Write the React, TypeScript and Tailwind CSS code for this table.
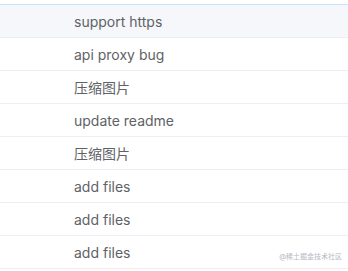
import React from 'react';

const commits = [
  'support https',
  'api proxy bug',
  '压缩图片',
  'update readme',
  '压缩图片',
  'add files',
  'add files',
  'add files',
];

export default function App() {
  return (
    <div
      className="relative w-[348px] h-[271px] overflow-hidden bg-white text-[14px] text-[#606266]"
      style={{ fontFamily: 'Inter, "Noto Sans CJK SC", sans-serif' }}
    >
      <div className="h-[4px]" />
      <div className="border-t border-[#c6e2ff]">
        {commits.map((msg, i) => (
          <div
            key={i}
            className={`h-[33px] flex items-center pl-[74px] border-b border-[#ebeef5] ${
              i === 0 ? 'bg-[#f5f7fa]' : 'bg-white'
            }`}
          >
            {msg}
          </div>
        ))}
      </div>
      <div className="absolute right-[6px] top-[253px] text-[7px] leading-none text-[#b4b8bf]">
        @稀土掘金技术社区
      </div>
    </div>
  );
}
